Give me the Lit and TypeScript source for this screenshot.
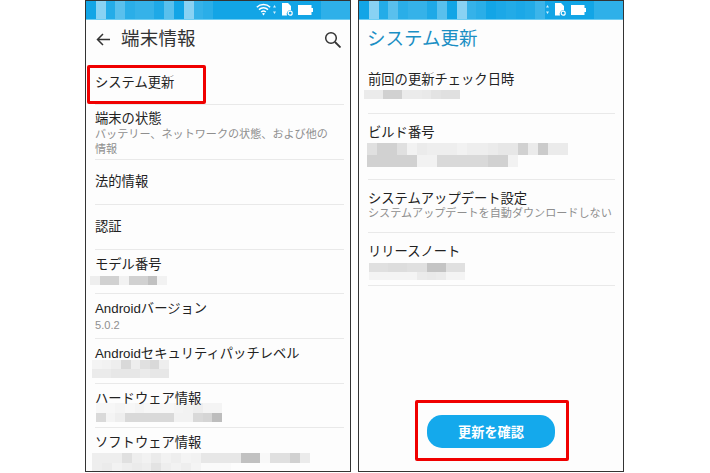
import { LitElement, html, css } from "lit";
import { customElement } from "lit/decorators.js";

type Blur = { w: number; h: number; dx: number; mt: number; cells: number[][] };

function blurBlock(b: Blur) {
  return html`<div class="blur" style="width:${b.w}px;height:${b.h}px;margin-left:${b.dx}px;margin-top:${b.mt}px">
    ${b.cells.map(
      (row) => html`<div class="blur-row">
        ${row.map((a) => html`<span style="background:rgba(110,110,110,${a})"></span>`)}
      </div>`
    )}
  </div>`;
}

const leftTiles = [0, 0.5, 0.08, 0.3, 0.1, 0.15, 0.15, 0.05, 0.3, 0, 0.5, 0.15, 0.1, 0, 0, 0, 0, 0, 0, 0, 0, 0, 0, 0, 0.12, 0.12, 0.12];
const rightTiles = [0, 0.5, 0.08, 0.3, 0.1, 0.15, 0.15, 0.05, 0.3, 0, 0.5, 0.15, 0.1, 0, 0.04, 0.07, 0.04, 0.07, 0.18, 0, 0, 0, 0, 0, 0.12, 0.12, 0.12];

@customElement("app-root")
export class AppRoot extends LitElement {
  static styles = css`
    :host { display: block; width: 710px; height: 473px; background: #fff; overflow: hidden;
      font-family: "Liberation Sans", "Noto Sans CJK JP", sans-serif; color: #1c1c1c; }
    .page { display: flex; gap: 7px; padding-left: 85px; height: 473px; box-sizing: border-box; }
    .phone { position: relative; width: 266px; height: 472px; box-sizing: border-box; border: 1px solid #333;
      background: #fdfdfd; display: flex; flex-direction: column; overflow: hidden; }
    .status { height: 18px; flex: none; display: flex; background: #12a5e6; position: relative; border-bottom: 1px solid #6fcdf2; }
    .status .tile { flex: 1; }
    .status-icons { position: absolute; top: 2px; left: 170px; display: flex; align-items: center; }
    .wifi { margin-right: 2px; }
    .right .wifi { visibility: hidden; }
    .dots { margin-right: 6px; }
    .file { margin-right: 5px; }
    .appbar { height: 41px; flex: none; display: flex; align-items: center; padding: 0 9px 3px 10px; box-sizing: border-box; }
    .appbar .title { font-size: 18.5px; margin: 0 0 5px 11px; color: #333; flex: 1; letter-spacing: 0.2px; }
    .right .appbar { padding-left: 8px; }
    .right .appbar .title { margin-left: 0; color: #1b8fc4; letter-spacing: 0; }
    .rows { display: flex; flex-direction: column; padding: 0 6px 0 9px; }
    .right .rows { padding: 0 8px 0 9px; }
    .row { border-bottom: 1px solid #e9e9e9; box-sizing: border-box; padding-top: 9px; }
    .t { font-size: 13.3px; line-height: 17px; color: #222; white-space: nowrap; }
    .s { font-size: 11.1px; line-height: 13px; color: #8f8f8f; white-space: nowrap; }
    .s.multi { line-height: 15px; }
    .blur { display: flex; flex-direction: column; }
    .blur-row { flex: 1; display: flex; }
    .blur-row span { flex: 1; }
    .mark { position: absolute; border: 3px solid #f00000; border-radius: 2px; box-sizing: border-box; pointer-events: none; }
    .mark.a { left: 1px; top: 64px; width: 119px; height: 39px; }
    .mark.b { left: 56px; top: 399px; width: 154px; height: 61px; }
    .btn { position: absolute; left: 68px; top: 414px; width: 128px; height: 33px; border-radius: 15px; background: #14a9ec;
      color: #fff; font-size: 13.2px; font-weight: 700; display: flex; align-items: center; justify-content: center; }
    svg { display: block; }
  `;

  statusBar(tiles: number[]) {
    return html`<div class="status">
      ${tiles.map((a) => html`<div class="tile" style="background:rgba(255,255,255,${a})"></div>`)}
      <div class="status-icons">
        <svg class="wifi" width="15" height="13" viewBox="0 0 15 13"><path d="M.8 4.200a9.800 9.800 0 0 1 13.400 0M3 6.600a6.600 6.600 0 0 1 9 0M5.200 9a3.400 3.400 0 0 1 4.600 0" fill="none" stroke="#fff" stroke-width="1.500"/><path d="M6 10.600a2.200 2.200 0 0 1 3 0l-1.500 1.900z" fill="#fff"/></svg>
        <svg class="dots" width="3" height="9" viewBox="0 0 3 9"><path d="M1.500 0 3 2.500H0zM0 6.500h3L1.500 9z" fill="#cfeefb"/></svg>
        <svg class="file" width="11" height="13" viewBox="0 0 11 13"><path d="M0 0h6l3 3v4.300A3.700 3.700 0 0 0 5 12.500H0z" fill="#fff"/><circle cx="8.200" cy="10.200" r="2" fill="none" stroke="#fff" stroke-width="1.200"/></svg>
        <svg width="15" height="10" viewBox="0 0 15 10"><path d="M0 0h13.500v3H15v4h-1.500v3H0z" fill="#fff"/></svg>
      </div>
    </div>`;
  }

  left() {
    return html`<div class="phone left">
      ${this.statusBar(leftTiles)}
      <div class="appbar">
        <svg width="14" height="13" viewBox="0 0 14 13"><path d="M14 6.500H2M7 1 1.500 6.500 7 12" fill="none" stroke="#333" stroke-width="1.500"/></svg>
        <div class="title">端末情報</div>
        <svg width="17" height="17" viewBox="0 0 17 17"><circle cx="7" cy="7" r="5.300" fill="none" stroke="#333" stroke-width="1.500"/><path d="M11 11l5.500 5.500" stroke="#333" stroke-width="1.800"/></svg>
      </div>
      <div class="rows">
        <div class="row" style="height:44px;padding-top:13px"><div class="t">システム更新</div></div>
        <div class="row" style="height:55px;padding-top:5px">
          <div class="t">端末の状態</div>
          <div class="s multi">バッテリー、ネットワークの状態、および他の<br />情報</div>
        </div>
        <div class="row" style="height:45px;padding-top:13px"><div class="t">法的情報</div></div>
        <div class="row" style="height:45px;padding-top:13px"><div class="t">認証</div></div>
        <div class="row" style="height:44px;padding-top:6px">
          <div class="t">モデル番号</div>
          ${blurBlock({ w: 77, h: 9, dx: -5, mt: 3, cells: [[0.1, 0.3, 0.3, 0.08, 0.3, 0.3, 0.42, 0.08]] })}
        </div>
        <div class="row" style="height:45px;padding-top:6px">
          <div class="t">Androidバージョン</div>
          <div class="s" style="margin-top:2px">5.0.2</div>
        </div>
        <div class="row" style="height:45px;padding-top:6px">
          <div class="t">Androidセキュリティパッチレベル</div>
          ${blurBlock({ w: 77, h: 18, dx: -3, mt: -2, cells: [[0.06, 0.08, 0.1, 0.25, 0.1, 0.2, 0.25, 0.1], [0.12, 0.12, 0.15, 0.15, 0.15, 0.12, 0.15, 0.15]] })}
        </div>
        <div class="row" style="height:44px;padding-top:6px">
          <div class="t">ハードウェア情報</div>
          ${blurBlock({ w: 126, h: 19, dx: 1, mt: -4, cells: [[0.04, 0.04, 0.06, 0.04, 0.06, 0.04, 0.04, 0.04, 0.06, 0.08, 0.1, 0.06, 0.06], [0.25, 0.06, 0.1, 0.25, 0.25, 0.25, 0.25, 0.25, 0.08, 0.08, 0.25, 0.28, 0.45]] })}
        </div>
        <div style="padding-top:6px">
          <div class="t">ソフトウェア情報</div>
          ${blurBlock({ w: 218, h: 19, dx: -3, mt: 2, cells: [
            [0.1, 0.1, 0.1, 0.2, 0.1, 0.08, 0.12, 0.08, 0.1, 0.06, 0.08, 0.15, 0.15, 0.15, 0.15, 0.42, 0.42, 0.03, 0.2, 0.2, 0.3, 0.12],
            [0.1, 0.12, 0.08, 0.1, 0.12, 0.1, 0.18, 0.1, 0.08, 0.1, 0.06, 0.02, 0.02, 0.02, 0, 0, 0, 0, 0, 0, 0, 0],
          ] })}
        </div>
      </div>
      <div class="mark a"></div>
    </div>`;
  }

  right() {
    return html`<div class="phone right">
      ${this.statusBar(rightTiles)}
      <div class="appbar"><div class="title">システム更新</div></div>
      <div class="rows">
        <div class="row" style="height:53px;padding-top:10px">
          <div class="t">前回の更新チェック日時</div>
          ${blurBlock({ w: 96, h: 9, dx: -4, mt: 2, cells: [[0.12, 0.12, 0.3, 0.3, 0.12, 0.12, 0.14, 0.18, 0.2, 0.2]] })}
        </div>
        <div class="row" style="height:66px;padding-top:10px">
          <div class="t">ビルド番号</div>
          ${blurBlock({ w: 201, h: 24, dx: -1, mt: 2, cells: [
            [0.2, 0.3, 0.3, 0.2, 0.08, 0.12, 0.1, 0.1, 0.1, 0.08, 0.1, 0.1, 0.12, 0.15, 0.15, 0.3, 0.12, 0.35, 0.12, 0.12],
            [0.3, 0.3, 0.3, 0.3, 0.3, 0.08, 0.08, 0.25, 0.25, 0.25, 0.25, 0.25, 0.3, 0.3, 0.08, 0, 0, 0, 0, 0],
          ] })}
        </div>
        <div class="row" style="height:53px;padding-top:10px">
          <div class="t">システムアップデート設定</div>
          <div class="s">システムアップデートを自動ダウンロードしない</div>
        </div>
        <div class="row" style="height:53px;padding-top:10px">
          <div class="t">リリースノート</div>
          ${blurBlock({ w: 96, h: 17, dx: 1, mt: 3, cells: [
            [0.2, 0.2, 0.22, 0.22, 0.2, 0.2, 0.4, 0.4, 0.2, 0.2],
            [0.06, 0.06, 0.06, 0.06, 0.06, 0.12, 0.14, 0.12, 0.06, 0.06],
          ] })}
        </div>
      </div>
      <div class="btn">更新を確認</div>
      <div class="mark b"></div>
    </div>`;
  }

  render() {
    return html`<div class="page">${this.left()}${this.right()}</div>`;
  }
}
